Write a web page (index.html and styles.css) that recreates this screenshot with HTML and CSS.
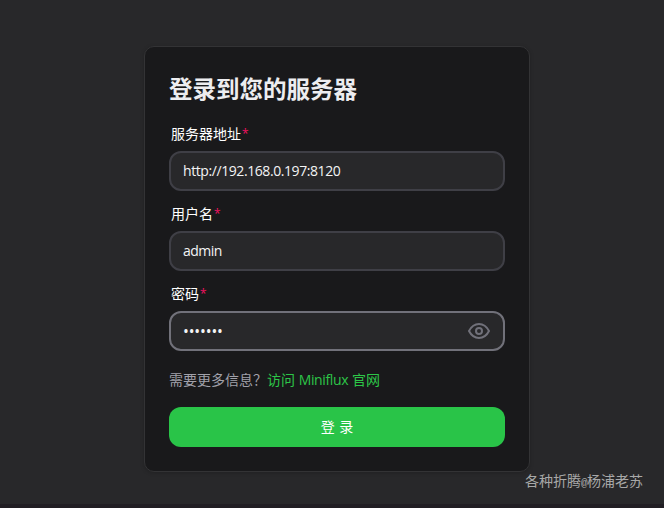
FILE: index.html
```
<!DOCTYPE html>
<html lang="zh-CN">
<head>
<meta charset="utf-8">
<title>登录</title>
<link rel="stylesheet" href="styles.css">
</head>
<body>
<main class="page">
  <form class="card">
    <h1 class="title">登录到您的服务器</h1>
    <div class="field">
      <label class="label" for="server">服务器地址<span class="required">*</span></label>
      <div class="control"><input class="input url" id="server" type="text" value="http://192.168.0.197:8120"></div>
    </div>
    <div class="field">
      <label class="label" for="user">用户名<span class="required">*</span></label>
      <div class="control"><input class="input name" id="user" type="text" value="admin"></div>
    </div>
    <div class="field">
      <label class="label" for="password">密码<span class="required">*</span></label>
      <div class="control control-active">
        <span class="input dots" id="password">•••••••</span>
        <svg class="eye" viewBox="0 0 24 24" fill="none" stroke="currentColor" stroke-width="2" stroke-linecap="round" stroke-linejoin="round"><path d="M2 12C4.500 7.200 7.800 5 12 5S19.500 7.200 22 12C19.500 16.800 16.200 19 12 19S4.500 16.800 2 12Z"/><circle cx="12" cy="12" r="3"/></svg>
      </div>
    </div>
    <p class="help">需要更多信息？<a class="link">访问 <span class="brand">Miniflux</span> 官网</a></p>
    <button class="submit" type="button">登 录</button>
  </form>
  <div class="watermark">各种折腾<span class="at">@</span>杨浦老苏</div>
</main>
</body>
</html>
```
FILE: styles.css
```
* { box-sizing: border-box; }
body {
  margin: 0;
  font-family: "Open Sans", "Noto Sans CJK SC", sans-serif;
  font-size: 14px;
  color: #fff;
  background: #27272a;
}
.page {
  position: relative;
  height: 508px;
  padding-top: 46px;
  background: #28282a;
  border-bottom: 4px solid #211e23;
}
.card {
  width: 386px;
  height: 426px;
  margin: 0 0 0 144px;
  padding: 24px;
  display: flex;
  flex-direction: column;
  border: 1px solid #333335;
  border-radius: 10px;
  background: #19191b;
  box-shadow: 0 1px 4px rgba(0, 0, 0, .2);
}
.title {
  margin: 0 0 16px;
  font-size: 23.5px;
  line-height: 36px;
  font-weight: 700;
  color: #ededf0;
}
.field { height: 80px; }
.label {
  display: flex;
  height: 28px;
  padding: 1px 2px 0;
  line-height: 20px;
}
.required { margin-left: 1px; font-size: 12px; color: #f31260; }
.control {
  display: flex;
  align-items: center;
  height: 40px;
  padding: 0 12px;
  border: 2px solid #3f3f46;
  border-radius: 12px;
  background: #28282a;
}
.control-active { border-color: #71717a; }
.input {
  flex: 1;
  min-width: 0;
  padding: 0;
  border: 0;
  outline: 0;
  font: inherit;
  line-height: 20px;
  color: #f4f4f5;
  background: transparent;
}
.url { letter-spacing: -.42px; }
.name { letter-spacing: -.5px; }
.dots { font-size: 15.5px; letter-spacing: -.15px; }
.eye { width: 24px; height: 24px; color: #71717a; }
.help { margin: 7px 0 17px; line-height: 20px; color: #a1a1aa; }
.link { color: #2dc548; }
.brand { letter-spacing: -.35px; }
.submit {
  height: 40px;
  padding: 0 0 2px;
  border: 0;
  border-radius: 12px;
  font: inherit;
  word-spacing: 1px;
  color: #fff;
  background: #29c448;
}
.watermark {
  position: absolute;
  left: 525px;
  top: 471px;
  line-height: 20px;
  white-space: nowrap;
  color: #a8a8a8;
}
.at { display: inline-block; width: 6px; font: 11px "Liberation Mono", monospace; }
```
